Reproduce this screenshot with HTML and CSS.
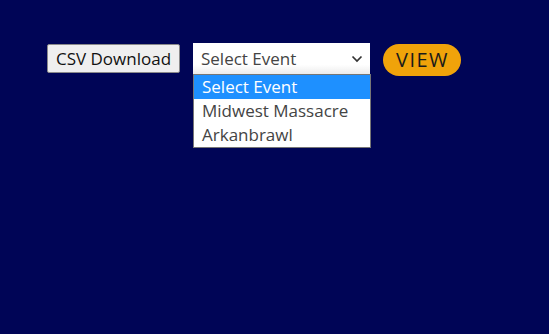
FILE: index.html
```html
<!DOCTYPE html>
<html lang="en">
<head>
  <meta charset="UTF-8" />
  <title>Event Results</title>
  <link rel="stylesheet" href="styles.css">
</head>
<body>

<div class="toolbar">
  <button class="csv-button">CSV Download</button>

  <div class="event-select">
    <div class="select-box">
      <span>Select Event</span>
      <svg class="chevron" width="12" height="8" viewBox="0 0 12 8">
        <path d="M1.5 1.5 L6 6 L10.5 1.5" fill="none" stroke="#333" stroke-width="1.7"/>
      </svg>
    </div>
    <ul class="select-options">
      <li class="selected">Select Event</li>
      <li>Midwest Massacre</li>
      <li>Arkanbrawl</li>
    </ul>
  </div>

  <button class="view-button">VIEW</button>
</div>

</body>
</html>
```

FILE: styles.css
```css
body {
  font-family: "Open Sans", "Noto Sans", sans-serif;
  background-color: #000556;
  margin: 0;
  height: 100vh;
}

.toolbar {
  display: flex;
  align-items: flex-start;
  padding: 43px 0 0 47px;
}

.csv-button {
  font-family: inherit;
  font-size: 17px;
  color: #111;
  background-color: #efefef;
  border: 1px solid #8a8a8a;
  border-radius: 2px;
  height: 29px;
  width: 133px;
  margin-top: 1px;
  margin-right: 13px;
  padding: 0;
}

/* Select box with its open option list */
.event-select {
  position: relative;
  width: 177px;
  margin-right: 13px;
}

.select-box {
  display: flex;
  align-items: center;
  justify-content: space-between;
  height: 31px;
  padding: 0 7px 0 8px;
  box-sizing: border-box;
  background: linear-gradient(#fff 70%, #ececec);
  color: #444;
  font-size: 17px;
}

.select-options {
  position: absolute;
  top: 31px;
  left: 0;
  width: 178px;
  box-sizing: border-box;
  list-style-type: none;
  margin: 0;
  padding: 0;
  background: #fff;
  border: 1px solid #767676;
  font-size: 17px;
  color: #444;
}

.select-options li {
  height: 24px;
  line-height: 24px;
  padding-left: 8px;
}

.select-options li.selected {
  background-color: #1e90ff;
  color: #fff;
}

.view-button {
  font-family: inherit;
  font-size: 20px;
  letter-spacing: 1.5px;
  color: #1a1a1a;
  background-color: #f0a30a;
  border: none;
  border-radius: 16px;
  width: 78px;
  height: 32px;
  margin-top: 1px;
  padding: 0 0 2px 1px;
}
```
